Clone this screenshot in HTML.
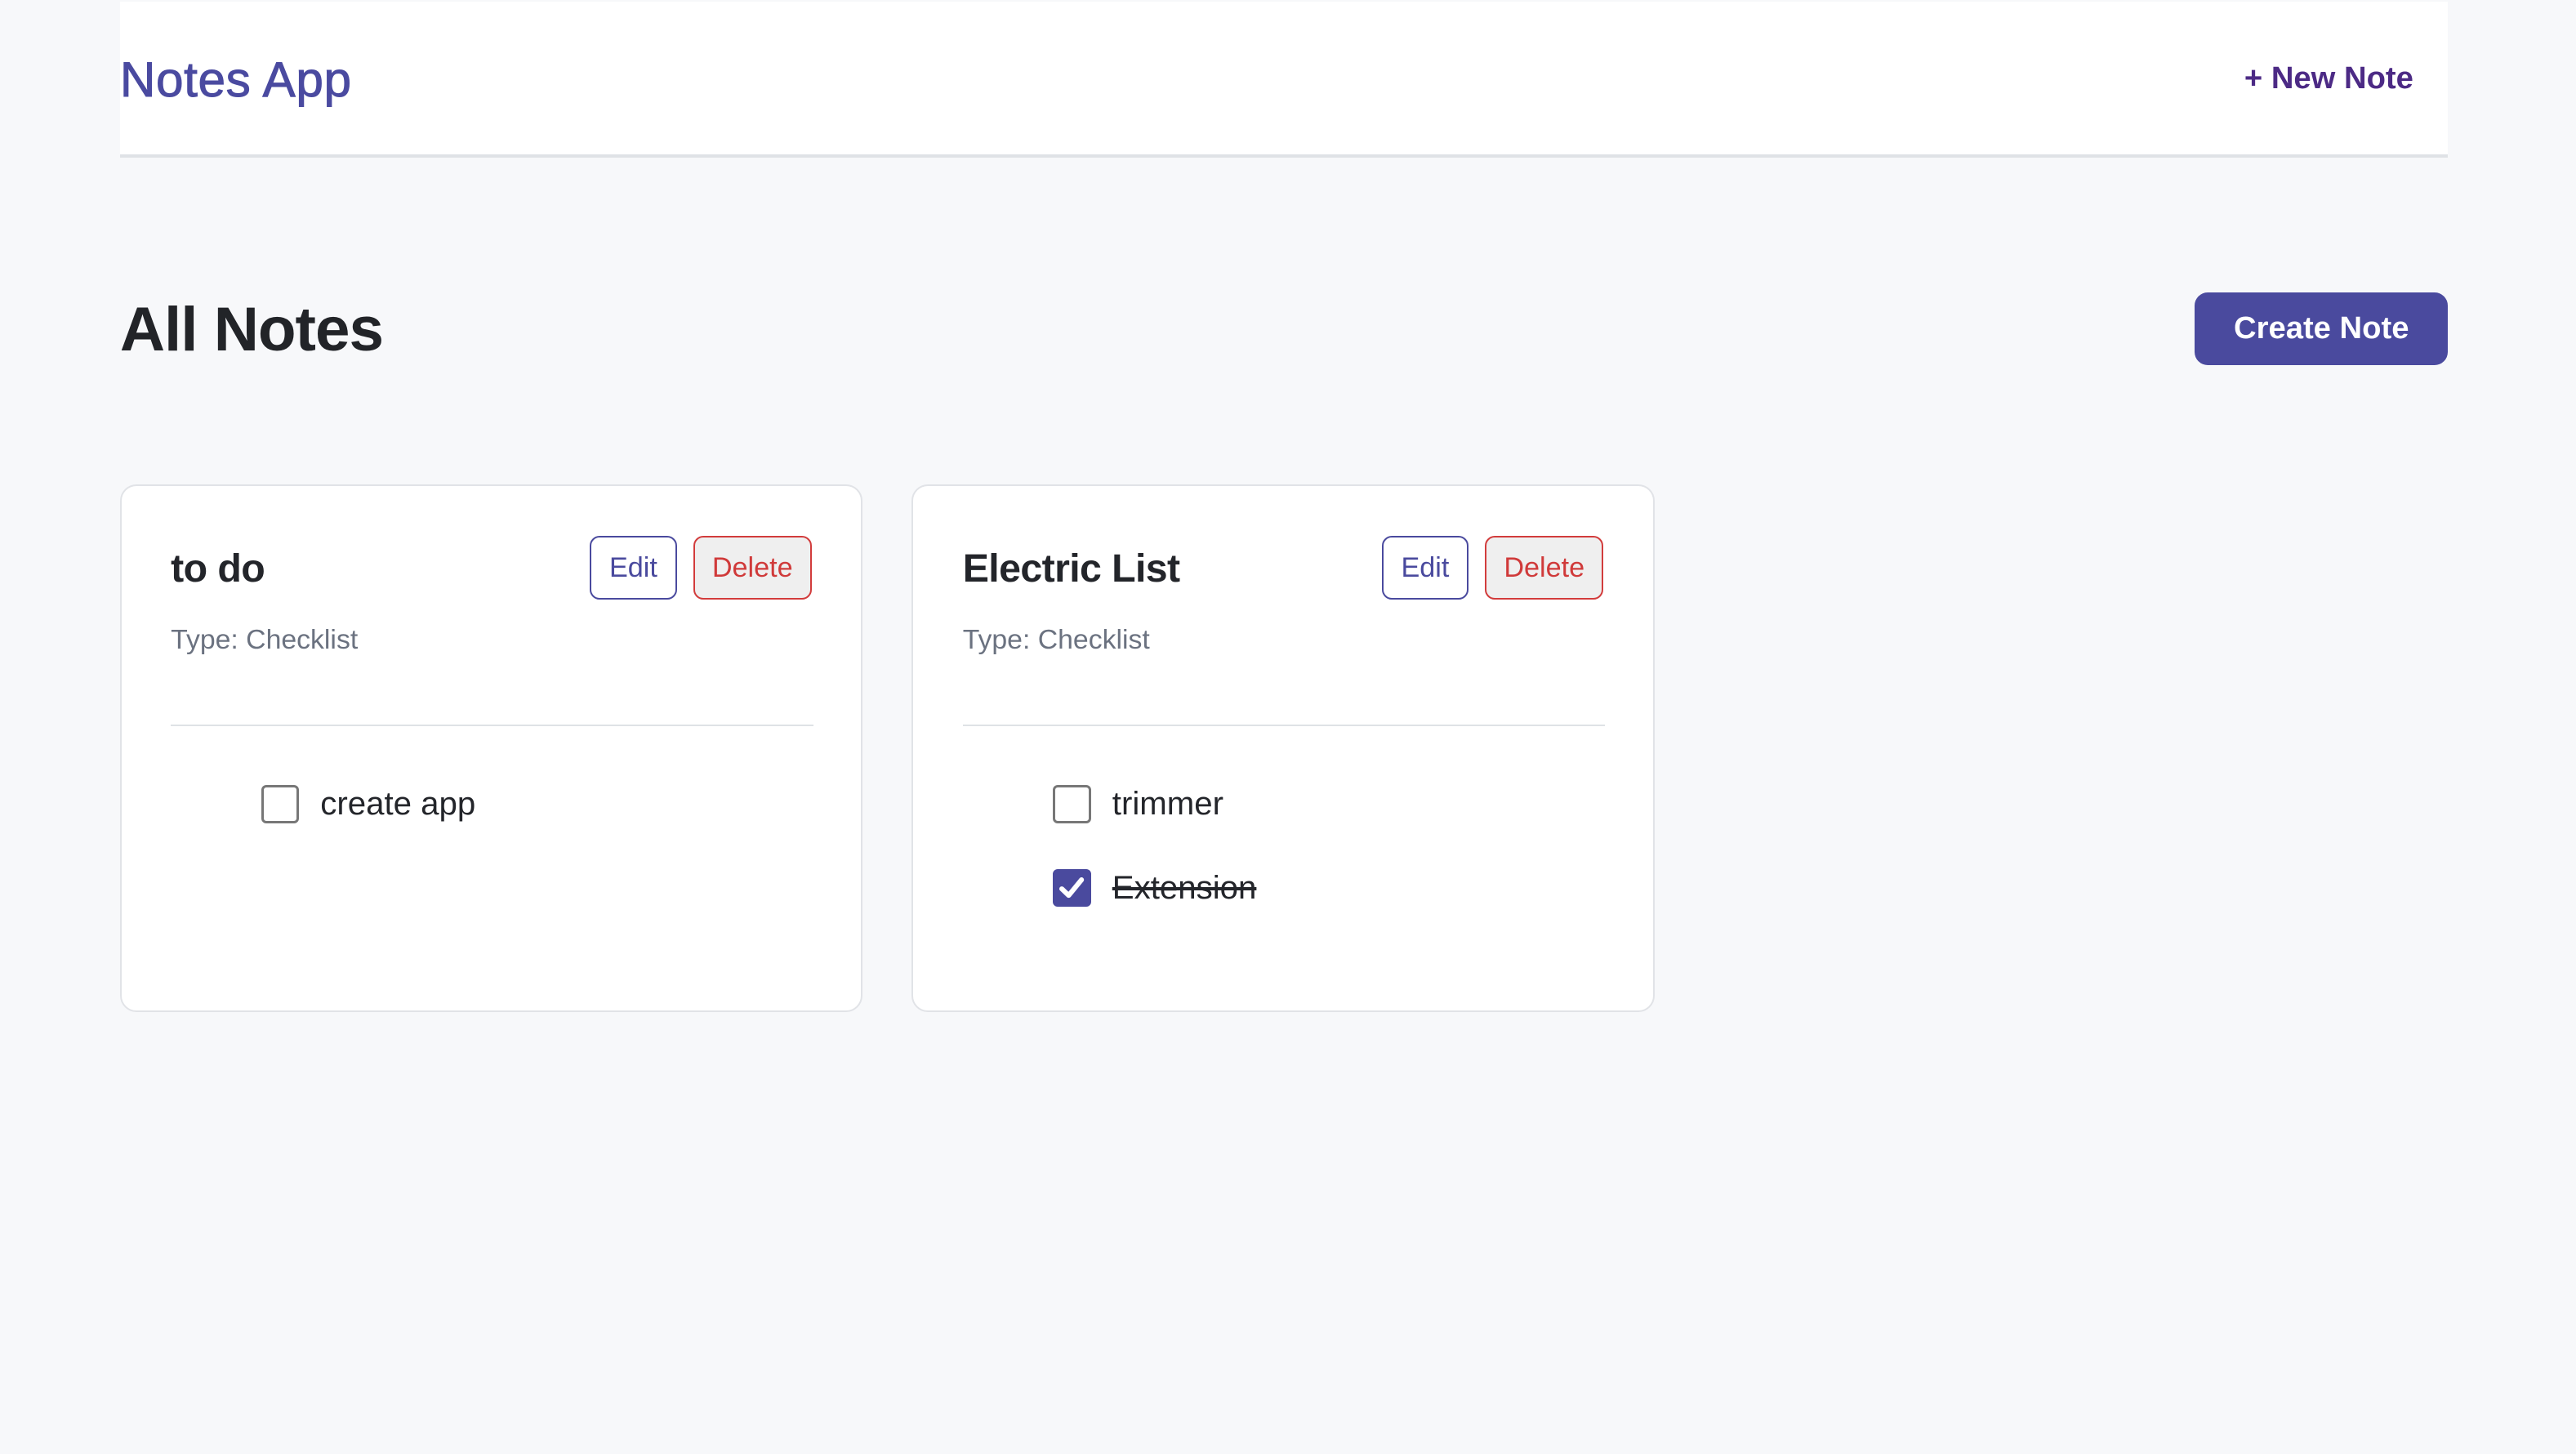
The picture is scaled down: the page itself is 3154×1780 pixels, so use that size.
<!DOCTYPE html>
<html><head><meta charset="utf-8"><style>
html,body{margin:0;padding:0;}
body{width:3154px;height:1780px;background:#f7f8fa;overflow:hidden;font-family:"Liberation Sans",sans-serif;}
#z{zoom:2.0115;position:relative;width:1568px;height:885px;}
.a{position:absolute;white-space:nowrap;}
.hdr{left:73px;top:1px;width:1417px;height:93px;background:#fff;border-bottom:2px solid #dfe2e6;}
.card{position:absolute;top:295px;width:450px;height:319px;background:#fff;border:1px solid #e1e3e7;border-radius:10px;}
.card .t{left:30px;top:36px;font-size:24px;font-weight:bold;color:#23252a;letter-spacing:-0.3px;}
.card .edit{left:285px;top:30px;width:53px;height:39px;box-sizing:border-box;border:1.3px solid #4a4a9e;border-radius:6px;color:#4a4a9e;font-size:17px;text-align:center;line-height:37px;}
.card .del{left:348px;top:30px;width:72px;height:39px;box-sizing:border-box;border:1.3px solid #d23c3c;border-radius:6px;background:#efefef;color:#d03a3a;font-size:17px;text-align:center;line-height:37px;}
.card .ty{left:30px;top:84px;font-size:16.8px;color:#6b7280;}
.card .hr{left:30px;top:145px;width:391px;height:1px;background:#dfe2e6;}
.cb{position:absolute;left:85px;width:20px;height:20px;border:1.5px solid #777;border-radius:3px;background:#fff;}
.cb.on{background:#4a4a9e;border-color:#4a4a9e;}
.lb{position:absolute;left:121px;font-size:20px;color:#23252a;}
</style></head><body><div id="z">
<div class="a hdr"></div>
<div class="a" style="left:73px;top:31px;font-size:30px;color:#4a4aa0;-webkit-text-stroke:0.5px #4a4aa0;letter-spacing:0.3px;">Notes App</div>
<div class="a" style="right:99px;top:37px;font-size:19px;font-weight:bold;color:#4c2a85;">+ New Note</div>
<div class="a" style="left:73px;top:179px;font-size:38px;font-weight:bold;color:#222428;letter-spacing:-0.5px;">All Notes</div>
<div class="a" style="left:1336px;top:178px;width:154px;height:44px;background:#4a4a9e;border-radius:8px;color:#fff;font-size:19px;font-weight:bold;text-align:center;line-height:44px;">Create Note</div>

<div class="card" style="left:73px;">
 <div class="a t">to do</div>
 <div class="a edit">Edit</div>
 <div class="a del">Delete</div>
 <div class="a ty">Type: Checklist</div>
 <div class="a hr"></div>
 <div class="cb" style="top:182px;"></div>
 <div class="lb" style="top:182px;">create app</div>
</div>

<div class="card" style="left:555px;">
 <div class="a t">Electric List</div>
 <div class="a edit">Edit</div>
 <div class="a del">Delete</div>
 <div class="a ty">Type: Checklist</div>
 <div class="a hr"></div>
 <div class="cb" style="top:182px;"></div>
 <div class="lb" style="top:182px;">trimmer</div>
 <div class="cb on" style="top:233px;"><svg width="20" height="20" viewBox="0 0 20 20" style="display:block"><path d="M4 10.5 L8.2 14.5 L16 5" fill="none" stroke="#fff" stroke-width="3" stroke-linecap="round" stroke-linejoin="round"/></svg></div>
 <div class="lb" style="top:233px;text-decoration:line-through;">Extension</div>
</div>
</div></body></html>
